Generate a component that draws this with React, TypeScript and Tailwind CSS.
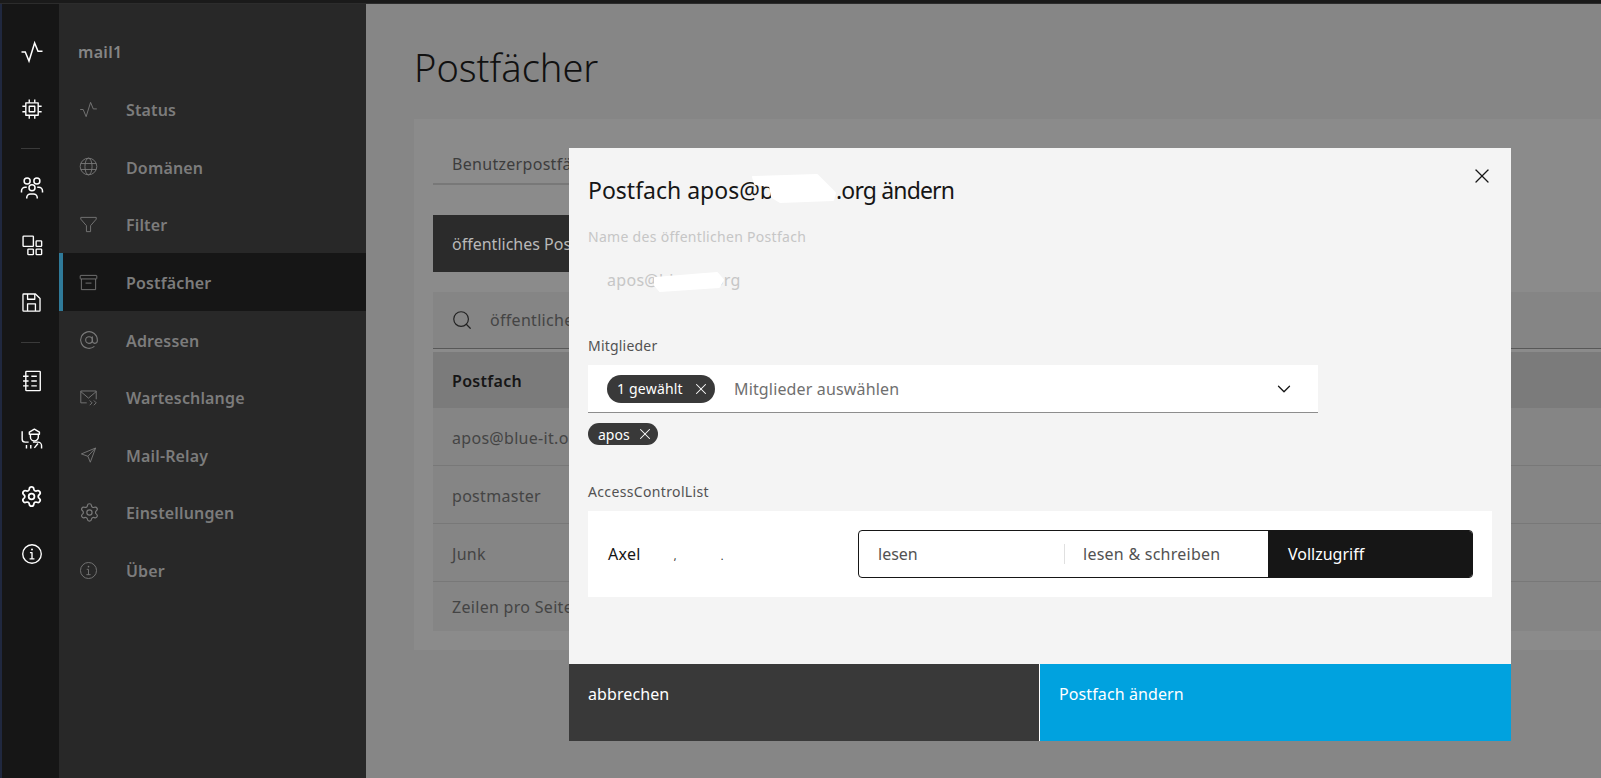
import React from "react";
import { AtSign, ChevronDown, Search, Settings, X } from "lucide-react";

type IP = { s: number; w?: number };
const Svg = ({ s, w = 2, children }: IP & { children: React.ReactNode }) => (
  <svg width={s} height={s} viewBox="0 0 32 32" fill="none" stroke="currentColor" strokeWidth={w} strokeLinejoin="round">
    {children}
  </svg>
);
const Gear = ({ s, w = 2 }: IP) => <Settings size={s * 1.1} strokeWidth={(w * 24) / (s * 1.1) * (s / 32) * 1.33} />;
const Info = (p: IP) => (
  <Svg {...p}>
    <circle cx="16" cy="16" r="13.5" />
    <path d="M12.5 23h7M16 23v-9h-3" />
    <circle cx="16" cy="9.5" r="1.4" fill="currentColor" stroke="none" />
  </Svg>
);
const Activity = (p: IP) => (
  <Svg {...p}><path d="M2 16h5l5 12 7.5-24 4.5 11h6" strokeLinejoin="miter" /></Svg>
);
const Chip = (p: IP) => (
  <Svg {...p}>
    <rect x="7" y="7" width="18" height="18" />
    <rect x="12" y="12" width="8" height="8" />
    <path d="M12 2v5M20 2v5M12 25v5M20 25v5M2 12h5M2 20h5M25 12h5M25 20h5" />
  </Svg>
);
const Events = (p: IP) => (
  <Svg {...p}>
    <circle cx="9.5" cy="6.5" r="4" />
    <circle cx="22.5" cy="6.5" r="4" />
    <circle cx="16" cy="15.5" r="4" />
    <path d="M2 22v-2a5 5 0 0 1 5-5h2M30 22v-2a5 5 0 0 0-5-5h-2M9 30v-1a5 5 0 0 1 5-5h4a5 5 0 0 1 5 5v1" />
  </Svg>
);
const Apps = (p: IP) => (
  <Svg {...p}>
    <rect x="3" y="3" width="15" height="15" rx="1" />
    <rect x="22" y="10" width="8" height="8" rx="1" />
    <rect x="10" y="22" width="8" height="8" rx="1" />
    <rect x="22" y="22" width="8" height="8" rx="1" />
  </Svg>
);
const Save = (p: IP) => (
  <Svg {...p}>
    <path d="M4 3h18l7 7v18a1 1 0 0 1-1 1H4a1 1 0 0 1-1-1V4a1 1 0 0 1 1-1z" />
    <path d="M10 3v8h11V3M10 29V18h12v11" />
  </Svg>
);
const Notebook = (p: IP) => (
  <Svg {...p}>
    <rect x="7" y="2" width="21" height="28" rx="1" />
    <path d="M3 9h8M3 16h8M3 23h8M15 9h8M15 16h8M15 23h8" />
  </Svg>
);
const Officer = (p: IP) => (
  <Svg {...p}>
    <path d="M3 6v11a4 4 0 0 0 4 4h5" />
    <path d="M13 7l7-4 7 4v3H13zM14.5 10v4a5.5 5.5 0 0 0 11 0v-4" />
    <path d="M9 25v5M15 25v5M20 29l5-6M18 21h7a5 5 0 0 1 5 5v4" />
  </Svg>
);
const Globe = (p: IP) => (
  <Svg {...p}>
    <circle cx="16" cy="16" r="14" />
    <ellipse cx="16" cy="16" rx="6" ry="14" />
    <path d="M3 11h26M3 21h26" />
  </Svg>
);
const Funnel = (p: IP) => (
  <Svg {...p}><path d="M3 4h26v3L19.5 18v10h-7V18L3 7z" /></Svg>
);
const Archive = (p: IP) => (
  <Svg {...p}>
    <rect x="2" y="4" width="28" height="6" rx="1" />
    <path d="M4 10v18h24V10M11 17h10" />
  </Svg>
);
const MailQueue = (p: IP) => (
  <Svg {...p}>
    <path d="M13 25H3V5h26v14M3 6l13 11L29 6M18 21l4 4-4 4M25 21l4 4-4 4" />
  </Svg>
);
const Send = (p: IP) => (
  <Svg {...p}><path d="M4 15L28 5l-9 24-4-10zM15 19L28 5" /></Svg>
);
const At = ({ s }: IP) => <AtSign size={s + 1} strokeWidth={1.3} />;

type RI = [(p: IP) => React.ReactNode, number];
const rail1: RI[] = [[Activity, 24], [Chip, 22]];
const rail2: RI[] = [[Events, 24], [Apps, 22], [Save, 21]];
const rail3: RI[] = [[Notebook, 22], [Officer, 23], [Gear, 21], [Info, 22]];

const nav: [string, (p: IP) => React.ReactNode, boolean?][] = [
  ["Status", Activity],
  ["Domänen", Globe],
  ["Filter", Funnel],
  ["Postfächer", Archive, true],
  ["Adressen", At],
  ["Warteschlange", MailQueue],
  ["Mail-Relay", Send],
  ["Einstellungen", Gear],
  ["Über", Info],
];

const RailGroup = ({ items }: { items: RI[] }) => (
  <>
    {items.map(([I, s], i) => (
      <div key={i} className="h-[57.5px] flex items-center justify-center pl-[2px]">
        <I s={s} w={2} />
      </div>
    ))}
  </>
);
const RailDivider = () => (
  <div className="h-[21px] flex items-center justify-center">
    <div className="w-[19px] h-px bg-[#3a3a3a]" />
  </div>
);

const rows = ["apos@blue-it.org", "postmaster", "Junk"];

export default function App() {
  return (
    <div className="relative h-screen w-full overflow-hidden flex flex-col bg-[#868686] font-['Noto_Sans',sans-serif]">
      <div className="h-[4px] shrink-0 bg-[#1a1a1a] border-b border-[#2c2c2c]" />
      <div className="flex flex-1 min-h-0">
        <div className="w-[2px] bg-[#20283f]" />
        <div className="w-[57px] bg-[#161616] text-white pt-[19px] flex flex-col">
          <RailGroup items={rail1} />
          <RailDivider />
          <RailGroup items={rail2} />
          <RailDivider />
          <RailGroup items={rail3} />
        </div>
        <div className="w-[307px] bg-[#282828] text-[#7c7c7c] flex flex-col">
          <div className="h-[76.5px] pt-[19px] flex items-center pl-[19px] text-[16px] font-semibold tracking-[0.3px] text-[#858585]">mail1</div>
          {nav.map(([label, I, active]) => (
            <div
              key={label}
              className={
                active
                  ? "h-[57.6px] flex items-center bg-[#161616] border-l-4 border-[#2f7a99] pl-[16px]"
                  : "h-[57.6px] flex items-center border-l-4 border-transparent pl-[16px]"
              }
            >
              <span className="w-[47px] flex text-[#7a7a7a]">
                <I s={19} w={1.5} />
              </span>
              <span className="pt-[2px] text-[16px] font-semibold tracking-[0.15px]">{label}</span>
            </div>
          ))}
        </div>
        <div className="flex-1 min-w-0 pl-[48px]">
          <div className="h-[115px] pt-[39px] text-[38px] leading-[48px] font-[350] text-[#111111]">Postfächer</div>
          <div className="h-[531px] bg-[#8b8b8b] pl-[19px] tracking-[0.3px]">
            <div className="h-[66px] w-[220px] pt-[33px] pl-[19px] border-b-2 border-[#787878] text-[16px] leading-6 text-[#3d3d3d]">
              Benutzerpostfächer
            </div>
            <div className="mt-[30px] h-[57px] w-[260px] bg-[#2b2b2b] flex items-center pl-[19px] text-[16px] tracking-normal text-[#b9b9b9]">
              öffentliches Postfach
            </div>
            <div className="mt-[20px] h-[57px] bg-[#858585] border-b border-[#585858] flex items-center pl-[18px] text-[16px] text-[#444444]">
              <Search size={22} strokeWidth={1.3} className="text-[#222222]" />
              <span className="ml-[17px]">öffentliches Postfach</span>
            </div>
            <div className="mt-[3px] h-[56px] bg-[#7b7b7b] flex items-center pl-[19px] pt-[2px] text-[16px] font-semibold text-[#161616]">
              Postfach
            </div>
            {rows.map((r) => (
              <div key={r} className="h-[58px] bg-[#858585] border-b border-[#787878] flex items-center pl-[19px] pt-[2px] text-[16px] text-[#444444]">
                {r}
              </div>
            ))}
            <div className="h-[49px] bg-[#858585] flex items-center pl-[19px] text-[16px] text-[#444444]">Zeilen pro Seite</div>
          </div>
        </div>
      </div>

      {/* Modal */}
      <div className="absolute left-[569px] top-[148px] w-[942px] h-[593px] bg-[#f4f4f4] flex flex-col">
        <button className="absolute right-[17px] top-[16px] text-[#161616]">
          <X size={24} strokeWidth={1.3} />
        </button>
        <div className="mt-[26px] pl-[19px] text-[23px] leading-[32px] text-[#161616] flex">
          <span>Postfach apos@b</span>
          <span className="ml-[62px] tracking-[-0.85px]">.org ändern</span>
        </div>
        <svg className="absolute left-0 top-0 pointer-events-none" width="300" height="160" fill="#ffffff" stroke="#ffffff" strokeWidth="2" strokeLinejoin="round">
          <path d="M184 29L248 27L266 45L264 52L211 54L203 49L201 38L186 36Z" />
          <path d="M86 130L148 125L154 132L150 139L91 143L86 137Z" />
        </svg>
        <div className="mt-[22px] pl-[19px] text-[14px] leading-[18px] tracking-[0.3px] text-[#c6c6c6]">Name des öffentlichen Postfach</div>
        <div className="mt-[12px] h-[44px] flex items-center pl-[38px] text-[16px] tracking-[0.3px] text-[#c6c6c6]">
          apos@blue-it.org
        </div>
        <div className="mt-[35px] pl-[19px] text-[14px] leading-[18px] tracking-[0.2px] text-[#525252]">Mitglieder</div>
        <div className="mt-[10px] ml-[19px] w-[730px] h-[48px] bg-white border-b border-[#8d8d8d] flex items-center pl-[19px] pr-[23px]">
          <span className="h-[28px] w-[108px] rounded-full bg-[#393939] text-white text-[14px] tracking-[0.2px] flex items-center pl-[10px]">
            1 gewählt
            <X size={18} strokeWidth={1.4} className="ml-auto mr-[5px]" />
          </span>
          <span className="ml-[19px] text-[16px] tracking-[0.15px] text-[#6f6f6f]">Mitglieder auswählen</span>
          <ChevronDown size={22} strokeWidth={1.4} className="ml-auto text-[#161616]" />
        </div>
        <div className="mt-[10px] ml-[19px] w-[70px] h-[22px] rounded-full bg-[#393939] text-white text-[14px] flex items-center pl-[10px]">
          apos
          <X size={18} strokeWidth={1.4} className="ml-auto mr-[4px]" />
        </div>
        <div className="mt-[38px] pl-[19px] text-[14px] leading-[18px] tracking-[0.35px] text-[#525252]">AccessControlList</div>
        <div className="mt-[10px] ml-[19px] w-[904px] h-[86px] bg-white flex items-center pl-[20px]">
          <div className="w-[250px] text-[16px] tracking-[0.3px] text-[#161616]">
            Axel
            <span className="ml-[33px] text-[10px]">,</span>
            <span className="ml-[44px] text-[10px]">.</span>
          </div>
          <div className="w-[615px] h-[48px] border border-[#161616] rounded-[4px] flex overflow-hidden text-[16px]">
            <div className="w-[206px] pl-[19px] flex items-center text-[#525252] relative">
              lesen
              <div className="absolute right-0 top-[13px] h-[20px] w-px bg-[#e0e0e0]" />
            </div>
            <div className="w-[203px] pl-[18px] flex items-center tracking-[0.25px] text-[#525252]">lesen &amp; schreiben</div>
            <div className="flex-1 bg-[#161616] text-white pl-[20px] flex items-center">Vollzugriff</div>
          </div>
        </div>
        <div className="mt-auto h-[77px] flex text-[16px] text-white tracking-[0.1px]">
          <div className="w-[470px] bg-[#393939] pl-[19px] pt-[18px]">abbrechen</div>
          <div className="w-px bg-white" />
          <div className="flex-1 bg-[#00a2df] pl-[19px] pt-[18px]">Postfach ändern</div>
        </div>
      </div>
    </div>
  );
}
